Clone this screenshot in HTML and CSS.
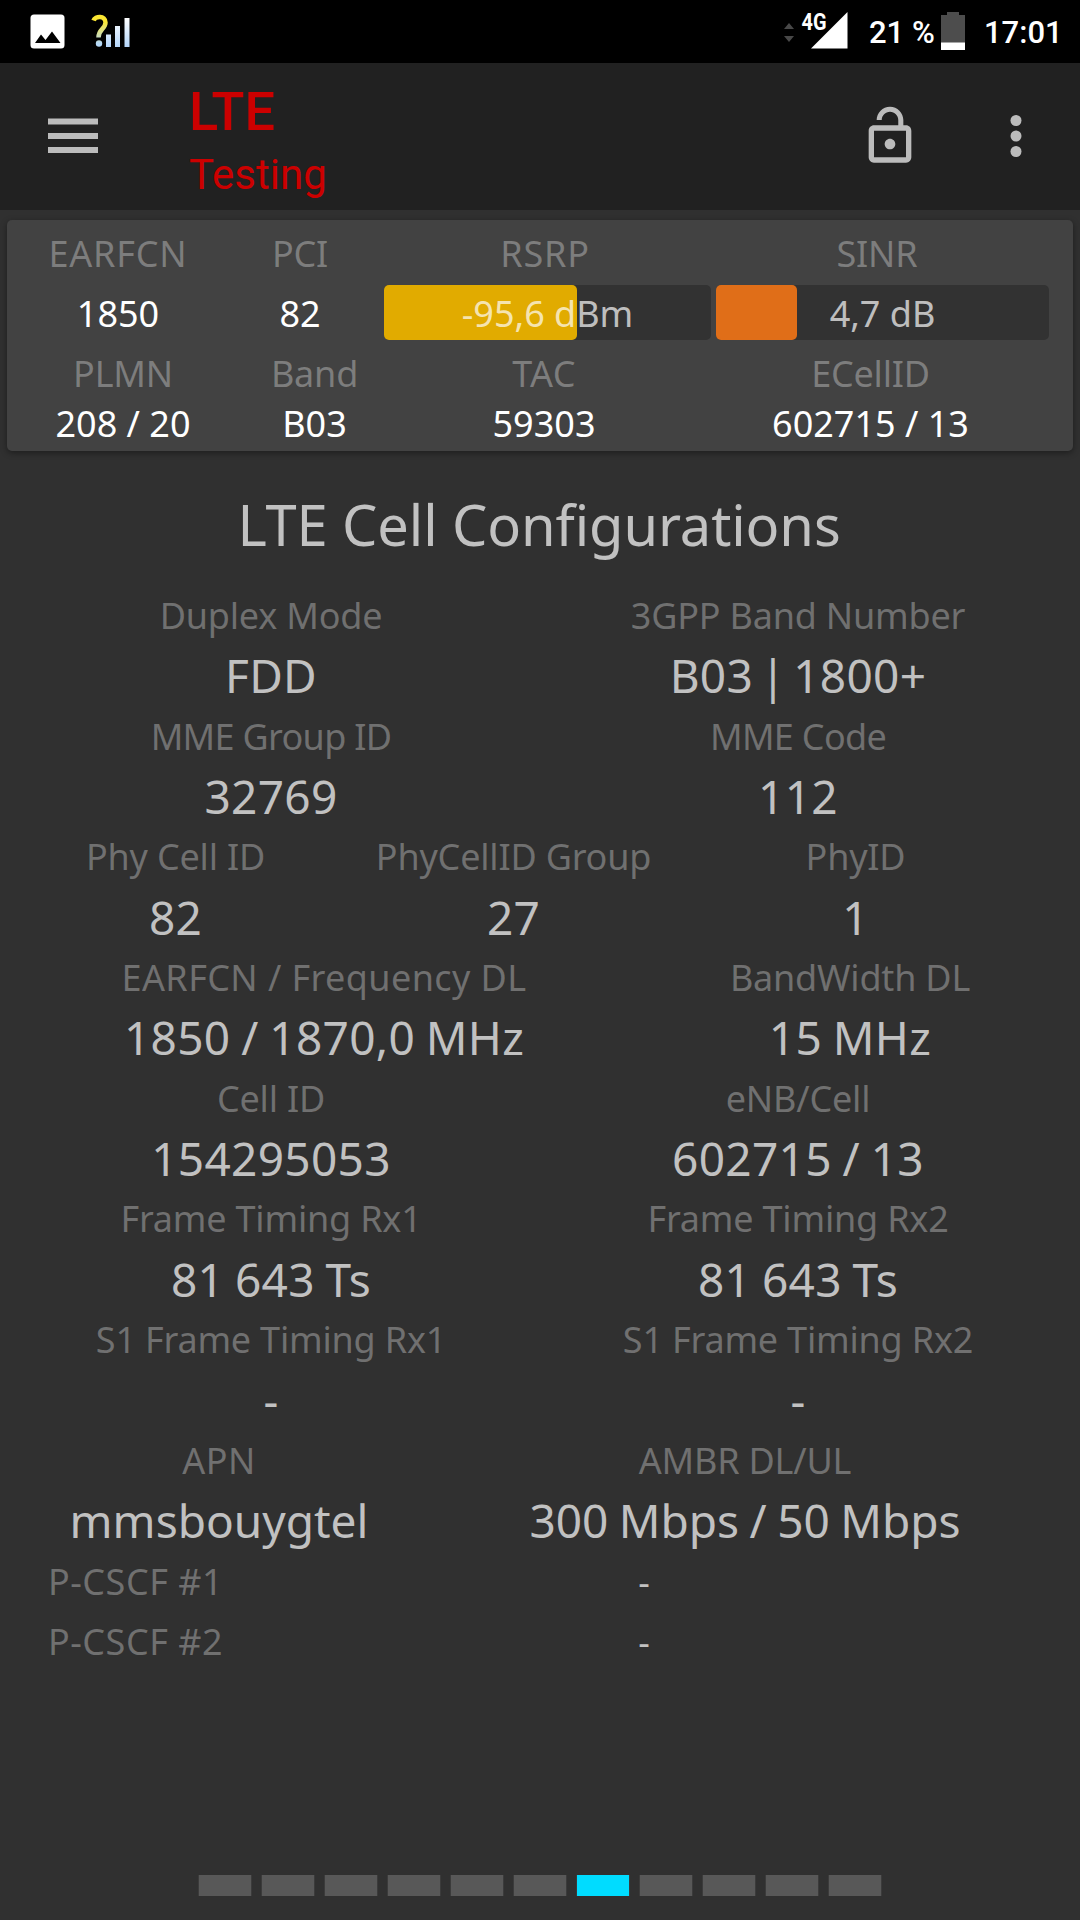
FILE: index.html
```html
<!DOCTYPE html>
<html lang="en">
<head>
    <meta charset="UTF-8">
    <meta name="viewport" content="width=device-width, initial-scale=1.0">
    <title>LTE Testing</title>
    <link rel="stylesheet" href="styles.css">
</head>
<body>
    <!-- Status bar -->
    <div class="status-bar">
        <svg class="status-left" width="140" height="63" viewBox="0 0 140 63">
            <defs>
                <linearGradient id="markFill" x1="0" y1="15" x2="0" y2="47" gradientUnits="userSpaceOnUse">
                    <stop offset="0.2" stop-color="#fbe632"/>
                    <stop offset="0.9" stop-color="#b4d8f8"/>
                </linearGradient>
                <linearGradient id="barFill" x1="0" y1="18" x2="0" y2="47" gradientUnits="userSpaceOnUse">
                    <stop offset="0" stop-color="#ffffff"/>
                    <stop offset="1" stop-color="#b4d6fa"/>
                </linearGradient>
            </defs>
            <rect x="30.5" y="14.5" width="34" height="34" rx="3.5" fill="#fff"/>
            <path d="M35 43L41 34.5L45.5 40L52 31.5L60.5 43Z" fill="#000"/>
            <path d="M93.5 20.5C95 16 105.5 15 105.5 22.5C105.5 29 98.5 29 98.5 37.5" fill="none" stroke="url(#markFill)" stroke-width="4.5"/>
            <circle cx="99" cy="43.5" r="3.2" fill="url(#markFill)"/>
            <path d="M106 34.5h5V47h-5zM115 26h5V47h-5zM124.5 18h5V47h-5z" fill="url(#barFill)"/>
        </svg>
        <div class="status-right">
            <svg width="66" height="63" viewBox="783 0 66 63">
                <path d="M784 29L789 23L794 29ZM784 36L789 42L794 36Z" fill="#484848"/>
                <path d="M811 48.5L847.5 12V48.5Z" fill="#fff"/>
                <text class="net-type" x="801.5" y="30" textLength="25" lengthAdjust="spacingAndGlyphs">4G</text>
            </svg>
            <span class="battery-text">21 %</span>
            <svg class="battery" width="24" height="38" viewBox="0 0 24 38">
                <path d="M0 3H6V0H18V3H24V38H0Z" fill="#4d4d4d"/>
                <path d="M0 30.5H24V38H0Z" fill="#fff"/>
            </svg>
            <span class="clock">17:01</span>
        </div>
    </div>

    <!-- App bar -->
    <header class="app-bar">
        <svg class="menu-icon" width="50" height="36" viewBox="0 0 50 36">
            <path d="M0 0.5H50V6.5H0ZM0 15H50V21H0ZM0 29H50V35H0Z" fill="#bcbcbc"/>
        </svg>
        <div class="titles">
            <h1>LTE</h1>
            <p>Testing</p>
        </div>
        <svg class="lock-icon" width="64" height="64" viewBox="0 0 24 24">
            <path d="M12 17c1.1 0 2-.9 2-2s-.9-2-2-2-2 .9-2 2 .9 2 2 2zm6-9h-1V6c0-2.760-2.240-5-5-5S7 3.240 7 6h1.900c0-1.710 1.390-3.100 3.100-3.100 1.710 0 3.100 1.390 3.100 3.100v2H6c-1.100 0-2 .9-2 2v10c0 1.100.9 2 2 2h12c1.100 0 2-.9 2-2V10c0-1.100-.9-2-2-2zm0 12H6V10h12v10z" fill="#bcbcbc"/>
        </svg>
        <svg class="more-icon" width="12" height="44" viewBox="0 0 12 44">
            <circle cx="6" cy="6.5" r="5.5" fill="#bcbcbc"/>
            <circle cx="6" cy="22" r="5.5" fill="#bcbcbc"/>
            <circle cx="6" cy="37.5" r="5.5" fill="#bcbcbc"/>
        </svg>
    </header>

    <!-- Serving cell summary -->
    <section class="summary">
        <div class="row top-labels label">
            <span class="loose">EARFCN</span><span>PCI</span><span class="loose">RSRP</span><span>SINR</span>
        </div>
        <div class="row top-values">
            <span>1850</span>
            <span>82</span>
            <div class="meter"><div class="fill rsrp" style="width: 193px"></div><span class="reading">-95,6 dBm</span></div>
            <div class="meter"><div class="fill sinr" style="width: 81px"></div><span class="reading">4,7 dB</span></div>
        </div>
        <div class="row bottom-labels label">
            <span>PLMN</span><span>Band</span><span class="loose">TAC</span><span>ECellID</span>
        </div>
        <div class="row bottom-values">
            <span>208 / 20</span><span>B03</span><span>59303</span><span>602715 / 13</span>
        </div>
    </section>

    <main>
        <h2>LTE Cell Configurations</h2>

        <div class="line half label"><span>Duplex Mode</span><span>3GPP Band Number</span></div>
        <div class="line half value"><span>FDD</span><span class="band">B03 | 1800+</span></div>

        <div class="line half label"><span class="tight">MME Group ID</span><span class="tight">MME Code</span></div>
        <div class="line half value"><span>32769</span><span>112</span></div>

        <div class="line thirds label"><span>Phy Cell ID</span><span>PhyCellID Group</span><span>PhyID</span></div>
        <div class="line thirds value"><span>82</span><span>27</span><span>1</span></div>

        <div class="line wide-left label"><span class="loose">EARFCN / Frequency DL</span><span>BandWidth DL</span></div>
        <div class="line wide-left value"><span>1850 / 1870,0 MHz</span><span>15 MHz</span></div>

        <div class="line half label"><span>Cell ID</span><span>eNB/Cell</span></div>
        <div class="line half value"><span>154295053</span><span>602715 / 13</span></div>

        <div class="line half label"><span>Frame Timing Rx1</span><span>Frame Timing Rx2</span></div>
        <div class="line half value"><span>81 643 Ts</span><span>81 643 Ts</span></div>

        <div class="line half label"><span>S1 Frame Timing Rx1</span><span>S1 Frame Timing Rx2</span></div>
        <div class="line half value"><span>-</span><span>-</span></div>

        <div class="line wide-right label"><span class="loose">APN</span><span>AMBR DL/UL</span></div>
        <div class="line wide-right value"><span class="apn">mmsbouygtel</span><span class="apn">300 Mbps / 50 Mbps</span></div>

        <div class="line pcscf"><span class="label">P-CSCF #1</span><span class="dash">-</span></div>
        <div class="line pcscf"><span class="label">P-CSCF #2</span><span class="dash">-</span></div>
    </main>

    <!-- Page indicator -->
    <nav class="pager">
        <i></i><i></i><i></i><i></i><i></i><i></i><i class="active"></i><i></i><i></i><i></i><i></i>
    </nav>
</body>
</html>
```
FILE: styles.css
```css
* {
    box-sizing: border-box;
}

body {
    margin: 0;
    width: 1080px;
    height: 1920px;
    display: flex;
    flex-direction: column;
    background: #303030;
    color: #c1c1c1;
    font-family: "Noto Sans", "Open Sans", sans-serif;
    overflow: hidden;
}

h1, h2, p {
    margin: 0;
    font-weight: 400;
}

svg {
    display: block;
    flex: none;
}

/* Status bar */
.status-bar {
    height: 63px;
    display: flex;
    justify-content: space-between;
    background: #000;
    color: #fff;
    font: 500 31px/63px Roboto, sans-serif;
}

.status-right {
    display: flex;
    align-items: center;
    padding-right: 18px;
}

.net-type {
    font: 700 24px Roboto, sans-serif;
    fill: #fff;
}

.battery-text {
    margin-left: 20px;
    width: 72px;
    white-space: nowrap;
    padding-top: 2px;
}

.battery {
    width: 24px;
    margin-top: -1px;
}

.clock {
    margin-left: 19px;
    padding-top: 2px;
    width: 78px;
}

/* App bar */
.app-bar {
    height: 147px;
    display: flex;
    align-items: center;
    padding: 0 58px 0 48px;
    background: #212121;
    color: #c00;
    font-family: Roboto, sans-serif;
}

.menu-icon {
    margin-top: -2px;
}

.titles {
    margin-left: 91px;
    padding-top: 12px;
    flex: 1;
}

.titles h1 {
    font-size: 54px;
    line-height: 64px;
    font-weight: 500;
}

.titles p {
    font-size: 42px;
    line-height: 62px;
}

.lock-icon {
    margin: -2px 88px 0 0;
}

.more-icon {
    margin-top: -2px;
}

/* Summary card */
.summary {
    height: 231px;
    margin: 10px 7px 0;
    border-radius: 5px;
    background: #424242;
    color: #fff;
    font-size: 36px;
    box-shadow: 0 2px 6px rgba(0, 0, 0, 0.4);
}

.row {
    display: grid;
    text-align: center;
    white-space: nowrap;
}

.label {
    color: rgba(255, 255, 255, 0.31);
    font-size: 36px;
    letter-spacing: -0.2px;
}

.label .loose {
    letter-spacing: 0.4px;
}

.label .tight {
    letter-spacing: -0.7px;
}

.top-labels {
    grid-template-columns: 222px 142px 348px 316px;
    height: 65px;
    line-height: 67px;
}

.top-labels .loose {
    letter-spacing: 0.8px;
}

.top-values {
    grid-template-columns: 222px 142px 327px 333px;
    height: 55px;
    line-height: 57px;
}

.top-values .meter:nth-child(3) {
    margin-left: 13px;
    margin-right: -13px;
}

.top-values .meter:nth-child(4) {
    margin-left: 18px;
    margin-right: -18px;
}

.bottom-labels,
.bottom-values {
    grid-template-columns: 232px 151px 308px 345px;
    line-height: 67px;
}

.bottom-values {
    line-height: 34px;
}

.meter {
    position: relative;
    height: 55px;
    border-radius: 5px;
    background: #323232;
    color: rgba(255, 255, 255, 0.7);
}

.fill {
    position: absolute;
    left: 0;
    top: 0;
    height: 100%;
    border-radius: 5px;
}

.fill.rsrp {
    background: #e1ab00;
}

.fill.sinr {
    background: #e06e18;
}

.reading {
    position: relative;
}

/* Cell configuration */
main {
    padding: 33px 18px 0 7px;
    flex: 1;
}

h2 {
    padding-left: 9px;
    margin-bottom: 22px;
    font-size: 56px;
    line-height: 80px;
    text-align: center;
    letter-spacing: -0.1px;
}

.line {
    display: grid;
    height: 60.35px;
    line-height: 60.35px;
    text-align: center;
    white-space: nowrap;
}

.value {
    font-size: 46px;
    line-height: 58.35px;
    letter-spacing: 0.3px;
    word-spacing: -1.5px;
}

.value .band {
    word-spacing: -5px;
}

.value .apn {
    letter-spacing: 0;
}

.half {
    grid-template-columns: 528px 526px;
}

.thirds {
    grid-template-columns: 337px 339px 345px;
}

.wide-left {
    grid-template-columns: 634px 418px;
}

.wide-right {
    grid-template-columns: 424px 628px;
}

.pcscf {
    grid-template-columns: 219px 754px;
    padding-left: 41px;
}

.pcscf .label {
    text-align: left;
    letter-spacing: 0.5px;
}

.dash {
    font-size: 36px;
}

/* Page indicator */
.pager {
    display: flex;
    justify-content: center;
    gap: 11px;
    padding-bottom: 24px;
}

.pager i {
    width: 52px;
    height: 21px;
    background: #585858;
    box-shadow: 1px 0 #3b3b3b, -1px 0 #3b3b3b;
}

.pager .active {
    background: #00dcff;
}
```
